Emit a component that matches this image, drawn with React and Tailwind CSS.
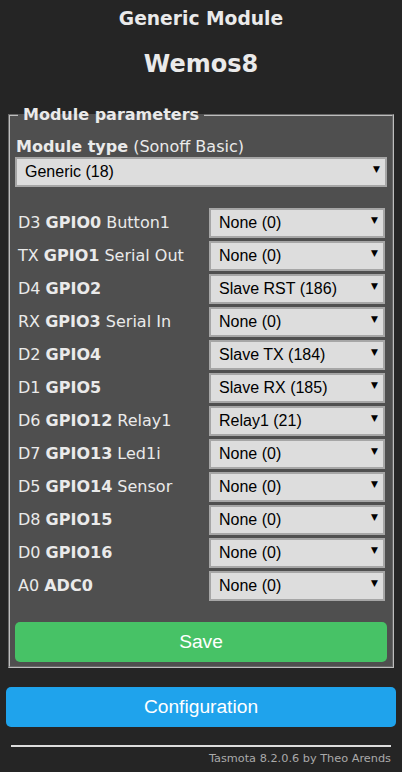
import React from "react";

const rows = [
  { pin: "D3", gpio: "GPIO0", name: "Button1", value: "None (0)" },
  { pin: "TX", gpio: "GPIO1", name: "Serial Out", value: "None (0)" },
  { pin: "D4", gpio: "GPIO2", name: "", value: "Slave RST (186)" },
  { pin: "RX", gpio: "GPIO3", name: "Serial In", value: "None (0)" },
  { pin: "D2", gpio: "GPIO4", name: "", value: "Slave TX (184)" },
  { pin: "D1", gpio: "GPIO5", name: "", value: "Slave RX (185)" },
  { pin: "D6", gpio: "GPIO12", name: "Relay1", value: "Relay1 (21)" },
  { pin: "D7", gpio: "GPIO13", name: "Led1i", value: "None (0)" },
  { pin: "D5", gpio: "GPIO14", name: "Sensor", value: "None (0)" },
  { pin: "D8", gpio: "GPIO15", name: "", value: "None (0)" },
  { pin: "D0", gpio: "GPIO16", name: "", value: "None (0)" },
  { pin: "A0", gpio: "ADC0", name: "", value: "None (0)" },
];

function Select({ value, className }) {
  return (
    <div className={"relative h-[30px] " + className}>
      <select
        defaultValue={value}
        className="appearance-none w-full h-full bg-[#dddddd] text-black border-2 border-[#a6a6a6] pl-[8px] pr-6 text-[16px] font-['Liberation_Sans',Arial,sans-serif] outline-none"
      >
        <option>{value}</option>
      </select>
      <span className="pointer-events-none absolute right-[7px] top-[8px] text-[9px] leading-none text-black">▼</span>
    </div>
  );
}

export default function App() {
  return (
    <div className="min-h-screen bg-[#252525] text-[#eaeaea] font-['DejaVu_Sans',Verdana,sans-serif]">
      <div className="px-[6px] pt-[8px]">
        <h3 className="text-center font-bold text-[18.7px] leading-[22px]">Generic Module</h3>
        <h2 className="text-center font-bold text-[24px] leading-[28px] mt-[20px]">Wemos8</h2>

        <fieldset className="mt-[27px] mx-[2px] bg-[#4f4f4f] border-2 border-[#bdbdbd] [border-style:groove] px-[5px] pb-[4px]">
          <legend className="ml-[3px] font-bold text-[16px] leading-[20px] px-[5px]">Module parameters</legend>

          <div className="pt-[12px] px-[1px] text-[16px] leading-[20px]">
            <b>Module type</b> (Sonoff Basic)
          </div>
          <Select value="Generic (18)" className="w-full" />

          <div className="mt-[21px]">
            {rows.map((r) => (
              <div key={r.gpio} className="flex items-center mb-[3px]">
                <div className="flex-1 pl-[3px] text-[16px] leading-[20px] whitespace-nowrap">
                  {r.pin} <b>{r.gpio}</b>{r.name ? " " + r.name : ""}
                </div>
                <Select value={r.value} className="w-[176px] mr-[2px]" />
              </div>
            ))}
          </div>

          <button className="mt-[18px] w-full h-[40px] rounded-[5px] bg-[#47c266] text-white text-[19.2px] font-['Liberation_Sans',Arial,sans-serif]">
            Save
          </button>
        </fieldset>

        <button className="mt-[19px] w-full h-[40px] rounded-[5px] bg-[#1fa3ec] text-white text-[19.2px] font-['Liberation_Sans',Arial,sans-serif]">
          Configuration
        </button>

        <div className="mx-[5px] mt-[18px] h-[2px] bg-[#dddddd]" />
        <div className="mx-[5px] mt-[5px] text-right text-[11.3px] leading-[14px] text-[#aaaaaa]">
          Tasmota 8.2.0.6 by Theo Arends
        </div>
      </div>
    </div>
  );
}
